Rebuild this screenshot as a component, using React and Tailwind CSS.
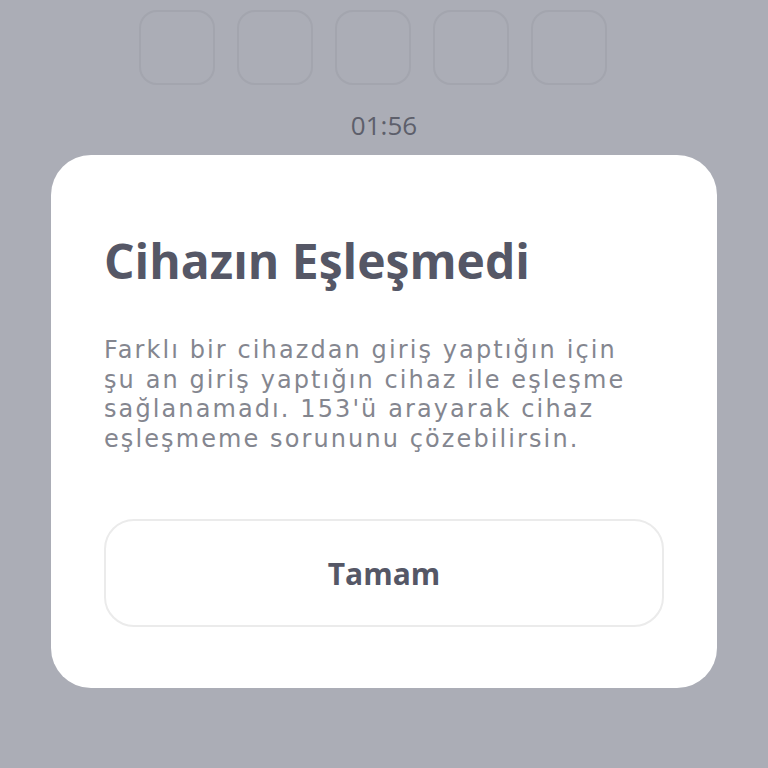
import React from 'react';

const SANS = { fontFamily: '"Open Sans", "Noto Sans", sans-serif' };
const BODY = { fontFamily: '"DejaVu Sans", "Open Sans", sans-serif' };

export default function App() {
  return (
    <div className="w-[768px] h-[768px] bg-[#abadb6] overflow-hidden flex flex-col items-center" style={SANS}>
      {/* Code boxes behind the dialog */}
      <div className="flex gap-[22px] pt-[10px] pr-[22px]">
        {[0, 1, 2, 3, 4].map((i) => (
          <div key={i} className="w-[76px] h-[75px] rounded-[18px] border-2 border-[#a3a5ae]" />
        ))}
      </div>
      <p className="mt-[23px] text-[26px] leading-[34px] text-[#5d5f6b]">01:56</p>

      {/* Dialog */}
      <div className="mt-[13px] w-[666px] bg-white rounded-[40px] px-[53px] pt-[79px] pb-[61px]">
        <h1 className="text-[48px] leading-[54px] font-bold text-[#555766]">Cihazın Eşleşmedi</h1>
        <p
          className="mt-[48px] text-[24px] leading-[29.5px] tracking-[2.1px] text-[#84868f] whitespace-nowrap"
          style={BODY}
        >
          Farklı bir cihazdan giriş yaptığın için
          <br />
          şu an giriş yaptığın cihaz ile eşleşme
          <br />
          sağlanamadı. 153'ü arayarak cihaz
          <br />
          eşleşmeme sorununu çözebilirsin.
        </p>
        <button className="mt-[65px] w-full h-[108px] rounded-[30px] border-2 border-[#ebebeb] text-[30px] font-bold text-[#555766]">
          Tamam
        </button>
      </div>
    </div>
  );
}
